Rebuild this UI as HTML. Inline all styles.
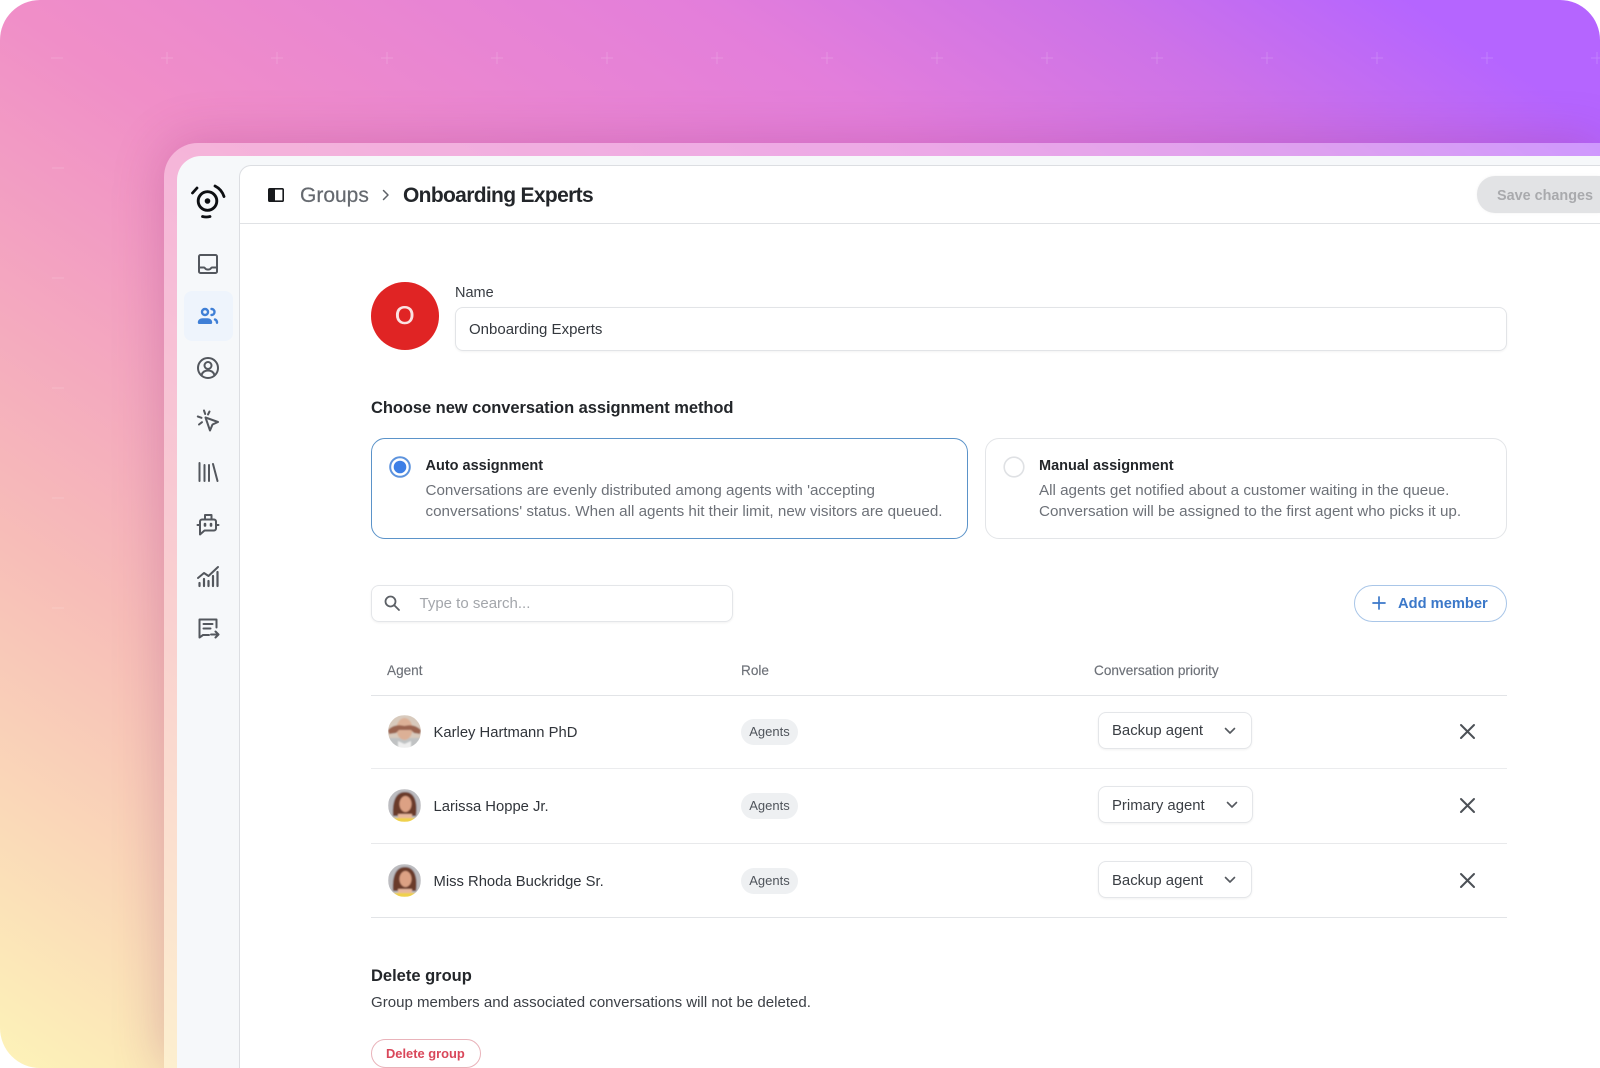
<!DOCTYPE html>
<html><head><meta charset="utf-8"><style>
html,body{margin:0;padding:0;background:#fff;width:1600px;height:1068px;overflow:hidden}
#r{position:absolute;left:0;top:0;width:1600px;height:1068px;overflow:hidden;font-family:"Liberation Sans",sans-serif;color:#30343a}
#r div,#r svg{position:absolute;box-sizing:border-box}
.t{line-height:20px;height:20px;white-space:nowrap;font-size:14.800px}
.b{font-weight:bold}
.g{color:#6d7178}
.line{left:371px;width:1136px;height:1px;background:#e2e4e7}
.badge{left:741px;width:57px;height:26px;border-radius:13px;background:#eef0f2;font-size:13px;line-height:26px;text-align:center;color:#4f545b}
.sel{left:1098px;height:37px;border:1px solid #e4e6e9;border-radius:8px;background:#fff;box-shadow:0 1px 2px rgba(0,0,0,.06);font-size:14.900px;line-height:37px;padding-left:13px;color:#3a3e44}
.ic{fill:none;stroke:#53575d;stroke-width:2;stroke-linecap:round;stroke-linejoin:round}
.h{font-size:13.600px;-webkit-text-stroke:.15px #6d7178}
</style></head><body><div id="r">
<div style="left:0;top:0;width:1600px;height:1068px;border-radius:40px;background:linear-gradient(to top right,#fdf3b8 0%,#f7bdb8 25%,#f08ec8 50%,#e37edb 72%,#cd72e8 84%,#b565ff 94%,#b565ff 100%)"></div>
<svg style="left:0;top:0" width="1600" height="1068"><g stroke="#fff" stroke-opacity=".17" stroke-width="1" fill="none">
<path d="M51 58h12M161 58h12M167 52v12M271 58h12M277 52v12M381 58h12M387 52v12M491 58h12M497 52v12M601 58h12M607 52v12M711 58h12M717 52v12M821 58h12M827 52v12M931 58h12M937 52v12M1041 58h12M1047 52v12M1151 58h12M1157 52v12M1261 58h12M1267 52v12M1371 58h12M1377 52v12M1481 58h12M1487 52v12M1591 58h9M1597 52v12M52 168h12M52 278h12M52 388h12M52 498h12M52 608h12"/></g></svg>
<div style="left:164px;top:143px;width:1436px;height:925px;border-radius:34px 0 0 0;background:rgba(255,255,255,.33);box-shadow:0 0 50px rgba(140,40,110,.27)"></div>
<div style="left:177px;top:156px;width:1423px;height:912px;border-radius:24px 0 0 0;background:#f6f8fa"></div>
<div style="left:239px;top:165px;width:1361px;height:903px;border-radius:12px 0 0 0;border:1px solid #dcdee2;border-right:none;border-bottom:none;background:#fff"></div>
<div style="left:240px;top:223px;width:1360px;height:1px;background:#e0e2e5"></div>
<div style="left:184px;top:291px;width:49px;height:50px;border-radius:8px;background:#eef4fc"></div>

<svg style="left:185px;top:178px" width="46" height="46" viewBox="185 178 46 46" fill="none" stroke="#0d0f12" stroke-linecap="round"><circle cx="207.500" cy="201" r="9.300" stroke-width="2.900"/><circle cx="207.500" cy="201" r="2.800" fill="#0d0f12" stroke="none"/><path stroke-width="2.800" d="M192.500 193 197 188M215 186C219 188 222.500 192 224 196.500M202.500 216.500C205 217.200 207.500 217.200 210 216.500"/></svg>

<svg class="ic" style="left:196px;top:252px" width="24" height="24" viewBox="0 0 24 24"><rect x="3" y="3" width="18" height="18" rx="1.500"/><path d="M3 15.500h5c1 0 1.200 2 3 2h2c1.800 0 2-2 3-2h5"/></svg>
<svg style="left:196px;top:304px" width="24" height="24" viewBox="0 0 24 24" fill="none" stroke="#3f7fd6" stroke-width="2.400" stroke-linecap="round" stroke-linejoin="round"><circle cx="9" cy="8" r="3"/><path fill="#3f7fd6" d="M3 18.800v-.3c0-2 1.500-3 3.500-3h5c2 0 3.500 1 3.500 3v.3z"/><path d="M15.500 5a3 3 0 0 1 0 6M19 15.500c1.300.5 2 1.500 2 3.300"/></svg>
<svg class="ic" style="left:196px;top:356px" width="24" height="24" viewBox="0 0 24 24"><circle cx="12" cy="12" r="10"/><circle cx="12" cy="9.500" r="3.500"/><path d="M5.500 19c1-3 3.500-4.500 6.500-4.500s5.500 1.500 6.500 4.500"/></svg>
<svg class="ic" style="left:196px;top:408px" width="24" height="24" viewBox="0 0 24 24"><path d="M9.500 9.500 22 14l-5.500 2.500-2.500 6z"/><path d="M8 2.500 9.200 6M1.800 8.500 5.500 9.800M3 16.500l3-2.300M13.500 3.500 12 6.500"/></svg>
<svg class="ic" style="left:196px;top:460px" width="24" height="24" viewBox="0 0 24 24"><path d="M3.500 3v18M8.500 5v16M13 5v16M17 4l4.500 17"/></svg>
<svg class="ic" style="left:196px;top:512px" width="24" height="24" viewBox="0 0 24 24"><path d="M6 7.500h12a2 2 0 0 1 2 2v7a2 2 0 0 1-2 2H8.500L4 22.500V9.500a2 2 0 0 1 2-2z"/><path d="M9 7.500V3h6.500v4.500M1.500 13H4M20 13h2.500"/><path stroke-width="2.600" d="M9 12v1.500M15 12v1.500"/></svg>
<svg class="ic" style="left:196px;top:564px" width="24" height="24" viewBox="0 0 24 24"><path d="M2 14 8 9l4.500 3L22 3"/><path d="M3.500 22v-3M8 22v-7M12.500 22v-5M17 22V12M21.500 22V8" stroke-width="2.200"/></svg>
<svg class="ic" style="left:196px;top:616px" width="24" height="24" viewBox="0 0 24 24"><path d="M20.500 11.500V3.500H3.500v18l3.500-2.500h6"/><path d="M7.500 8h9M7.500 12.500h7"/><path d="M15 18.500h7M19.500 15.500l3 3-3 3"/></svg>

<svg style="left:268px;top:188px" width="16" height="14" viewBox="0 0 16 14"><rect x=".8" y=".8" width="14.400" height="12.400" rx="1" fill="none" stroke="#17191c" stroke-width="1.600"/><rect x="1" y="1" width="6" height="12" fill="#17191c"/></svg>
<div class="t g" style="left:300px;top:185.500px;font-size:21px;color:#65696f;-webkit-text-stroke:.2px #65696f">Groups</div>
<svg style="left:380px;top:188px" width="12" height="14" viewBox="0 0 12 14" fill="none" stroke="#5e6268" stroke-width="1.500" stroke-linecap="round" stroke-linejoin="round"><path d="M3.500 2.500 8 7l-4.500 4.500"/></svg>
<div class="t b" style="left:403px;top:185.500px;font-size:21px;color:#23262a;letter-spacing:-.66px">Onboarding Experts</div>
<div style="left:1477px;top:176px;width:123px;height:37px;border-radius:18px 0 0 18px;background:#e2e3e5;box-shadow:0 0 3px rgba(0,0,0,.05)"></div>
<div class="t b" style="left:1497px;top:186px;font-size:14.400px;color:#a9aaad">Save changes</div>

<div style="left:370.500px;top:282px;width:68.500px;height:68px;border-radius:50%;background:#e02424;color:#fbe3e3;font-size:25px;line-height:68px;text-align:center;-webkit-text-stroke:.5px #fbe3e3">O</div>
<div class="t" style="left:455px;top:283px;font-size:14.500px;color:#383c42">Name</div>
<div style="left:455px;top:307px;width:1052px;height:44px;border:1px solid #e2e4e7;border-radius:8px;box-shadow:0 1px 2px rgba(0,0,0,.05)"></div>
<div class="t" style="left:469px;top:320px;font-size:15px;color:#34383e">Onboarding Experts</div>

<div class="t b" style="left:371px;top:398px;font-size:16.500px;letter-spacing:-.06px;color:#23262a">Choose new conversation assignment method</div>

<div style="left:370.500px;top:438px;width:597px;height:101px;border:1.500px solid #5b93c9;border-radius:14px;background:#fff"></div>
<svg style="left:388px;top:455px" width="24" height="24" viewBox="0 0 24 24"><circle cx="12" cy="12" r="9.800" fill="#fff" stroke="#5d93dd" stroke-width="2"/><circle cx="12" cy="12" r="6.300" fill="#3d7fe6"/></svg>
<div class="t b" style="left:425.500px;top:456px;font-size:14.500px;color:#23262a">Auto assignment</div>
<div class="t g" style="left:425.500px;top:481px;font-size:15.200px">Conversations are evenly distributed among agents with 'accepting</div>
<div class="t g" style="left:425.500px;top:502px;font-size:15.200px">conversations' status. When all agents hit their limit, new visitors are queued.</div>

<div style="left:985px;top:438px;width:522px;height:101px;border:1px solid #e3e5e8;border-radius:14px;background:#fff"></div>
<svg style="left:1002px;top:455px" width="24" height="24" viewBox="0 0 24 24"><circle cx="12" cy="12" r="9.800" fill="#fff" stroke="#dfe1e4" stroke-width="1.600"/></svg>
<div class="t b" style="left:1039px;top:456px;font-size:14.500px;color:#23262a">Manual assignment</div>
<div class="t g" style="left:1039px;top:481px;font-size:15.200px">All agents get notified about a customer waiting in the queue.</div>
<div class="t g" style="left:1039px;top:502px;font-size:15.200px">Conversation will be assigned to the first agent who picks it up.</div>

<div style="left:370.500px;top:585px;width:362.500px;height:37px;border:1px solid #e4e6e9;border-radius:8px;box-shadow:0 1px 2px rgba(0,0,0,.06)"></div>
<svg style="left:383px;top:594px" width="18" height="18" viewBox="0 0 18 18" fill="none" stroke="#5c6066" stroke-width="1.800" stroke-linecap="round"><circle cx="7.500" cy="7.500" r="5"/><path d="M11.500 11.500 16 16"/></svg>
<div class="t" style="left:419.500px;top:593.500px;font-size:15px;color:#a3a6ab">Type to search...</div>

<div style="left:1354px;top:585px;width:153px;height:37px;border:1px solid #a9c6e8;border-radius:19px"></div>
<svg style="left:1371px;top:595px" width="16" height="16" viewBox="0 0 16 16" stroke="#3b78c9" stroke-width="1.700" stroke-linecap="round"><path d="M8 2v12M2 8h12"/></svg>
<div class="t b" style="left:1398px;top:593.500px;font-size:14.700px;color:#3b78c9">Add member</div>

<div class="t g h" style="left:387px;top:660.500px">Agent</div>
<div class="t g h" style="left:741px;top:660.500px">Role</div>
<div class="t g h" style="left:1094px;top:660.500px">Conversation priority</div>
<div class="line" style="top:695px"></div>
<div class="line" style="top:768px;background:#ebecee"></div>
<div class="line" style="top:843px;background:#e8e9eb"></div>
<div class="line" style="top:917px"></div>

<svg style="left:388px;top:715px" width="33" height="33" viewBox="0 0 33 33"><defs><clipPath id="c"><circle cx="16.500" cy="16.500" r="16.500"/></clipPath><filter id="bl"><feGaussianBlur stdDeviation=".7"/></filter></defs><g clip-path="url(#c)"><g filter="url(#bl)"><rect width="33" height="33" fill="#d8cabd"/><rect y="23" width="33" height="10" fill="#c0c2c3"/><ellipse cx="16.500" cy="14" rx="8" ry="11" fill="#dcb096"/><path d="M0 15c4-4 9-6 16.500-4 7.500-2 12 0 16.500 4l-1 4-6-1-3-3H11l-3 3-7 1z" fill="#9a6450"/><path d="M10 26l6.500 3 6.500-3v7H10z" fill="#eeeeee"/></g></g></svg>
<svg style="left:388px;top:789px" width="33" height="33" viewBox="0 0 33 33"><g clip-path="url(#c)"><g filter="url(#bl)"><rect width="33" height="33" fill="#bcbcc0"/><path d="M5 27C4 12 8 3 17 3s13 9 11 24z" fill="#6a3a2a"/><ellipse cx="17.500" cy="15" rx="6" ry="8" fill="#dca184"/><path d="M10 25h14v8H10z" fill="#e8b89e"/><rect y="29" width="33" height="4" fill="#efd04a"/></g></g></svg>
<svg style="left:388px;top:864px" width="33" height="33" viewBox="0 0 33 33"><g clip-path="url(#c)"><g filter="url(#bl)"><rect width="33" height="33" fill="#bcbcc0"/><path d="M5 27C4 12 8 3 17 3s13 9 11 24z" fill="#6a3a2a"/><ellipse cx="17.500" cy="15" rx="6" ry="8" fill="#dca184"/><path d="M10 25h14v8H10z" fill="#e8b89e"/><rect y="29" width="33" height="4" fill="#efd04a"/></g></g></svg>

<div class="t" style="left:433.500px;top:722.500px">Karley Hartmann PhD</div>
<div class="t" style="left:433.500px;top:796.500px">Larissa Hoppe Jr.</div>
<div class="t" style="left:433.500px;top:871.500px">Miss Rhoda Buckridge Sr.</div>
<div class="badge" style="top:719px">Agents</div>
<div class="badge" style="top:793px">Agents</div>
<div class="badge" style="top:868px">Agents</div>

<div class="sel" style="top:712px;width:154px">Backup agent</div>
<div class="sel" style="top:786px;width:155px;line-height:38px">Primary agent</div>
<div class="sel" style="top:861px;width:154px;line-height:38px">Backup agent</div>
<svg style="left:1224px;top:726px" width="12" height="10" viewBox="0 0 12 10" fill="none" stroke="#55595f" stroke-width="1.600" stroke-linecap="round" stroke-linejoin="round"><path d="M1.500 2.500 6 7l4.500-4.500"/></svg>
<svg style="left:1226px;top:800px" width="12" height="10" viewBox="0 0 12 10" fill="none" stroke="#55595f" stroke-width="1.600" stroke-linecap="round" stroke-linejoin="round"><path d="M1.500 2.500 6 7l4.500-4.500"/></svg>
<svg style="left:1224px;top:875px" width="12" height="10" viewBox="0 0 12 10" fill="none" stroke="#55595f" stroke-width="1.600" stroke-linecap="round" stroke-linejoin="round"><path d="M1.500 2.500 6 7l4.500-4.500"/></svg>

<svg style="left:1458px;top:722px" width="19" height="19" viewBox="0 0 19 19" stroke="#4c5056" stroke-width="2" stroke-linecap="round"><path d="M3 3l13 13M16 3 3 16"/></svg>
<svg style="left:1458px;top:796px" width="19" height="19" viewBox="0 0 19 19" stroke="#4c5056" stroke-width="2" stroke-linecap="round"><path d="M3 3l13 13M16 3 3 16"/></svg>
<svg style="left:1458px;top:871px" width="19" height="19" viewBox="0 0 19 19" stroke="#4c5056" stroke-width="2" stroke-linecap="round"><path d="M3 3l13 13M16 3 3 16"/></svg>

<div class="t b" style="left:371px;top:966px;font-size:16.500px;color:#23262a">Delete group</div>
<div class="t" style="left:371px;top:993px;font-size:15.050px;color:#3c4046">Group members and associated conversations will not be deleted.</div>
<div style="left:371px;top:1039px;width:110px;height:29px;border:1px solid #e9b3ba;border-radius:15px"></div>
<div class="t b" style="left:386px;top:1044px;font-size:12.900px;color:#d9475a">Delete group</div>
</div></body></html>
